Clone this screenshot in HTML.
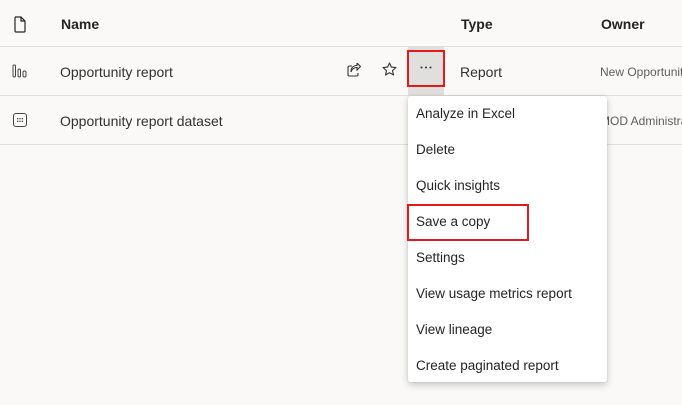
<!DOCTYPE html>
<html><head><style>
body{margin:0;width:682px;height:405px;background:#faf9f8;font-family:"Liberation Sans",sans-serif;color:#252423;position:relative;overflow:hidden}
.a{position:absolute;white-space:nowrap}
.line{position:absolute;left:0;width:682px;height:1px;background:#e1dfdd}
.menu{position:absolute;left:408px;top:96px;width:199px;height:286px;background:#fff;border-radius:3px;box-shadow:0 3px 8px rgba(0,0,0,.2),0 0 2px rgba(0,0,0,.12)}
.menu div{position:absolute;left:8px;font-size:13.5px;color:#252423}
</style></head><body>
<svg class="a" style="left:13px;top:16px" width="14" height="17" viewBox="0 0 14 17"><path d="M2 1h6l4 4v10a1 1 0 0 1-1 1H3a1 1 0 0 1-1-1V2a1 1 0 0 1 1-1z M8 1v4h4" fill="none" stroke="#252423" stroke-width="1.2"/></svg>
<div class="a" style="left:61px;top:16px;font-size:14px;font-weight:bold">Name</div>
<div class="a" style="left:461px;top:16px;font-size:14px;font-weight:bold">Type</div>
<div class="a" style="left:601px;top:16px;font-size:14px;font-weight:bold">Owner</div>
<div class="line" style="top:46px"></div>
<div class="line" style="top:95px"></div>
<div class="line" style="top:144px"></div>
<svg class="a" style="left:12px;top:64px" width="16" height="14" viewBox="0 0 16 14"><rect x="1" y="1" width="2.5" height="12" rx="1.2" fill="none" stroke="#444" stroke-width="1"/><rect x="6" y="5" width="2.5" height="8" rx="1.2" fill="none" stroke="#444" stroke-width="1"/><rect x="11" y="7" width="3" height="6" rx="1.4" fill="none" stroke="#444" stroke-width="1"/></svg>
<div class="a" style="left:60px;top:64px;font-size:14px;color:#323130">Opportunity report</div>
<svg class="a" style="left:347px;top:63px" width="14" height="14" viewBox="0 0 14 14"><path d="M5 3H2.5A1.5 1.5 0 0 0 1 4.5v7A1.5 1.5 0 0 0 2.5 13h7a1.5 1.5 0 0 0 1.5-1.5V10 M4 9c1-3 3-4.5 6-4.5V7l3.5-3.5L10 0v2.5C6 2.5 4 5 4 9z" fill="none" stroke="#333" stroke-width="1.1"/></svg>
<svg class="a" style="left:382px;top:62px" width="15" height="15" viewBox="0 0 15 15"><path d="M7.5 1l1.9 4.1 4.5.5-3.4 3 1 4.4-4-2.3-4 2.3 1-4.4-3.4-3 4.5-.5z" fill="none" stroke="#333" stroke-width="1.1" stroke-linejoin="round"/></svg>
<div class="a" style="left:408px;top:47px;width:36px;height:48px;background:#e1dfdd"></div>
<div class="a" style="left:407px;top:50px;width:34px;height:33px;border:2px solid #e3191c"></div>
<svg class="a" style="left:420px;top:66px" width="12" height="3"><circle cx="1.5" cy="1.5" r="1" fill="#333"/><circle cx="6" cy="1.5" r="1" fill="#333"/><circle cx="10.5" cy="1.5" r="1" fill="#333"/></svg>
<div class="a" style="left:460px;top:64px;font-size:14px;color:#323130">Report</div>
<div class="a" style="left:600px;top:65px;font-size:12px;color:#605e5c">New Opportunities</div>
<svg class="a" style="left:13px;top:113px" width="14" height="14" viewBox="0 0 14 14"><rect x=".5" y=".5" width="13" height="13" rx="2.5" fill="none" stroke="#444"/><g fill="#444"><rect x="4" y="5" width="1.3" height="1.3"/><rect x="6.4" y="5" width="1.3" height="1.3"/><rect x="8.8" y="5" width="1.3" height="1.3"/><rect x="4" y="7.7" width="1.3" height="1.3"/><rect x="6.4" y="7.7" width="1.3" height="1.3"/><rect x="8.8" y="7.7" width="1.3" height="1.3"/></g></svg>
<div class="a" style="left:60px;top:113px;font-size:14px;color:#323130">Opportunity report dataset</div>
<div class="a" style="left:600px;top:114px;font-size:12px;color:#605e5c">MOD Administrator</div>
<div class="menu">
<div style="top:10px">Analyze in Excel</div>
<div style="top:46px">Delete</div>
<div style="top:82px">Quick insights</div>
<div style="top:118px">Save a copy</div>
<div style="top:154px">Settings</div>
<div style="top:190px">View usage metrics report</div>
<div style="top:226px">View lineage</div>
<div style="top:262px">Create paginated report</div>
</div>
<div class="a" style="left:407px;top:204px;width:118px;height:33px;border:2px solid #e3191c"></div>
</body></html>
